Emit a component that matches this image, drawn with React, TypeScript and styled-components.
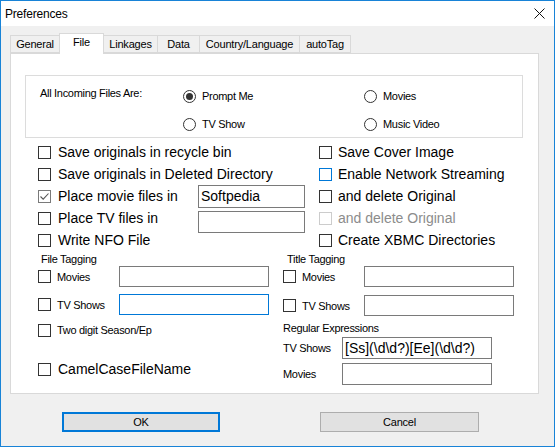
import React from "react";
import styled, { createGlobalStyle } from "styled-components";

const GlobalStyle = createGlobalStyle`
  html, body {
    margin: 0;
    padding: 0;
    background: #ffffff;
  }
  * {
    box-sizing: border-box;
  }
`;

const sans = `"Liberation Sans", Arial, sans-serif`;

const Window = styled.div`
  width: 555px;
  height: 447px;
  border: 1px solid #1883d7;
  background: #f0f0f0;
  font-family: ${sans};
  color: #000;
  display: flex;
  flex-direction: column;
  overflow: hidden;
`;

const TitleBar = styled.div`
  height: 25px;
  background: #fff;
  display: flex;
  align-items: center;
  justify-content: space-between;
  padding: 0 9px 0 4px;
  font-size: 12px;
  letter-spacing: -0.2px;
`;

const Body = styled.div`
  padding: 7px 0 0 9px;
`;

const TabStrip = styled.div`
  display: flex;
  align-items: flex-end;
  height: 20px;
  position: relative;
  z-index: 2;
`;

const Tab = styled.div<{ $w: number; $active?: boolean }>`
  width: ${(p) => p.$w}px;
  height: ${(p) => (p.$active ? 21 : 18)}px;
  margin-bottom: ${(p) => (p.$active ? -1 : 0)}px;
  border: 1px solid #d9d9d9;
  border-bottom: ${(p) => (p.$active ? "none" : "1px solid #d9d9d9")};
  background: ${(p) => (p.$active ? "#fff" : "#f0f0f0")};
  font-size: 11px;
  letter-spacing: -0.2px;
  display: flex;
  justify-content: center;
  align-items: ${(p) => (p.$active ? "flex-start" : "center")};
  padding-top: ${(p) => (p.$active ? 2 : 0)}px;
  & + & {
    margin-left: -1px;
  }
`;

const Panel = styled.div`
  width: 529px;
  height: 341px;
  border: 1px solid #d9d9d9;
  background: #fff;
  padding: 21px 0 0 0;
`;

const GroupBox = styled.div`
  margin-left: 14px;
  width: 498px;
  height: 63px;
  border: 1px solid #dcdcdc;
  padding: 6px 0 0 14px;
  display: grid;
  grid-template-columns: 143px 181px 1fr;
  grid-template-rows: 28px 28px;
  align-items: center;
`;

const SmallText = styled.span<{ $lift?: number }>`
  font-size: 11px;
  letter-spacing: -0.3px;
  white-space: nowrap;
  margin-bottom: ${(p) => p.$lift ?? 0}px;
`;

const BigText = styled.span<{ $disabled?: boolean }>`
  font-size: 14px;
  white-space: nowrap;
  color: ${(p) => (p.$disabled ? "#8c8c8c" : "#000")};
`;

const Option = styled.label<{ $gap: number }>`
  display: flex;
  align-items: center;
  gap: ${(p) => p.$gap}px;
`;

const RadioCircle = styled.span<{ $on?: boolean }>`
  width: 13px;
  height: 13px;
  border-radius: 50%;
  border: 1px solid #333;
  background: #fff;
  display: inline-flex;
  align-items: center;
  justify-content: center;
  flex: none;
  &::after {
    content: "";
    width: 7px;
    height: 7px;
    border-radius: 50%;
    background: ${(p) => (p.$on ? "#333" : "transparent")};
  }
`;

type BoxState = "normal" | "checked" | "hover" | "disabled";

const boxBorder: Record<BoxState, string> = {
  normal: "#333333",
  checked: "#7a7a7a",
  hover: "#0078d7",
  disabled: "#cccccc",
};

const CheckSquare = styled.span<{ $state: BoxState }>`
  width: 13px;
  height: 13px;
  border: 1px solid ${(p) => boxBorder[p.$state]};
  background: #fff;
  flex: none;
  display: inline-flex;
  align-items: center;
  justify-content: center;
`;

const CheckBox = ({ state = "normal" }: { state?: BoxState }) => (
  <CheckSquare $state={state}>
    {state === "checked" && (
      <svg width="11" height="11" viewBox="0 0 11 11">
        <path d="M1.5 5.5 L4.2 8.2 L9.5 2.5" fill="none" stroke="#555" strokeWidth="1.1" />
      </svg>
    )}
  </CheckSquare>
);

const CheckGrid = styled.div`
  margin: 3px 0 0 27px;
  display: grid;
  grid-template-columns: 160px 107px 14px 1fr;
  grid-auto-rows: 22px;
  align-items: center;
`;

const Wide = styled.div`
  grid-column: 1 / 4;
`;

const TextBox = styled.div<{ $w: number; $h: number; $focus?: boolean; $shift?: number }>`
  width: ${(p) => p.$w}px;
  height: ${(p) => p.$h}px;
  border: 1px solid ${(p) => (p.$focus ? "#0078d7" : "#7a7a7a")};
  background: #fff;
  font-size: 14px;
  padding-left: 2px;
  display: flex;
  align-items: center;
  white-space: nowrap;
  margin-top: ${(p) => (p.$shift ?? 0) * 2}px;
`;

const Lower = styled.div`
  margin-left: 27px;
  display: grid;
  grid-template-columns: 245px 1fr;
`;

const Column = styled.div`
  display: flex;
  flex-direction: column;
`;

const Heading = styled.div<{ $indent: number; $mt?: number; $h?: number }>`
  height: ${(p) => p.$h ?? 15}px;
  margin-top: ${(p) => p.$mt ?? 0}px;
  padding-left: ${(p) => p.$indent}px;
  font-size: 11px;
  letter-spacing: -0.3px;
  display: flex;
  align-items: center;
`;

const FieldRow = styled.div<{ $label: number; $h: number; $mt?: number }>`
  display: grid;
  grid-template-columns: ${(p) => p.$label}px 150px;
  align-items: center;
  height: ${(p) => p.$h}px;
  margin-top: ${(p) => p.$mt ?? 0}px;
`;

const Footer = styled.div`
  display: flex;
  gap: 100px;
  margin: 18px 0 0 52px;
`;

const Button = styled.div<{ $primary?: boolean; $w: number }>`
  width: ${(p) => p.$w}px;
  height: 20px;
  border: ${(p) => (p.$primary ? "2px solid #0078d7" : "1px solid #adadad")};
  background: #e1e1e1;
  font-size: 11px;
  letter-spacing: -0.2px;
  display: flex;
  align-items: center;
  justify-content: center;
`;

const tabs = [
  { name: "General", w: 50 },
  { name: "File", w: 45, active: true },
  { name: "Linkages", w: 55 },
  { name: "Data", w: 43 },
  { name: "Country/Language", w: 101 },
  { name: "autoTag", w: 52 },
];

const App = () => {
  return (
    <>
      <GlobalStyle />
      <Window>
        <TitleBar>
          <span>Preferences</span>
          <svg width="11" height="11" viewBox="0 0 11 11">
            <path d="M0.5 0.5 L10.5 10.5 M10.5 0.5 L0.5 10.5" stroke="#111" strokeWidth="1" />
          </svg>
        </TitleBar>
        <Body>
          <TabStrip>
            {tabs.map((t) => (
              <Tab key={t.name} $w={t.w} $active={t.active}>
                {t.name}
              </Tab>
            ))}
          </TabStrip>
          <Panel>
            <GroupBox>
              <SmallText $lift={6}>All Incoming Files Are:</SmallText>
              <Option $gap={6}>
                <RadioCircle $on />
                <SmallText>Prompt Me</SmallText>
              </Option>
              <Option $gap={6}>
                <RadioCircle />
                <SmallText>Movies</SmallText>
              </Option>
              <span />
              <Option $gap={6}>
                <RadioCircle />
                <SmallText>TV Show</SmallText>
              </Option>
              <Option $gap={6}>
                <RadioCircle />
                <SmallText>Music Video</SmallText>
              </Option>
            </GroupBox>

            <CheckGrid>
              <Wide>
                <Option $gap={7}>
                  <CheckBox />
                  <BigText>Save originals in recycle bin</BigText>
                </Option>
              </Wide>
              <Option $gap={6}>
                <CheckBox />
                <BigText>Save Cover Image</BigText>
              </Option>

              <Wide>
                <Option $gap={7}>
                  <CheckBox />
                  <BigText>Save originals in Deleted Directory</BigText>
                </Option>
              </Wide>
              <Option $gap={6}>
                <CheckBox state="hover" />
                <BigText>Enable Network Streaming</BigText>
              </Option>

              <Option $gap={7}>
                <CheckBox state="checked" />
                <BigText>Place movie files in</BigText>
              </Option>
              <TextBox $w={107} $h={23}>Softpedia</TextBox>
              <span />
              <Option $gap={6}>
                <CheckBox />
                <BigText>and delete Original</BigText>
              </Option>

              <Option $gap={7}>
                <CheckBox />
                <BigText>Place TV files in</BigText>
              </Option>
              <TextBox $w={107} $h={22} $shift={4} />
              <span />
              <Option $gap={6}>
                <CheckBox state="disabled" />
                <BigText $disabled>and delete Original</BigText>
              </Option>

              <Wide>
                <Option $gap={7}>
                  <CheckBox />
                  <BigText>Write NFO File</BigText>
                </Option>
              </Wide>
              <Option $gap={6}>
                <CheckBox />
                <BigText>Create XBMC Directories</BigText>
              </Option>
            </CheckGrid>

            <Lower>
              <Column>
                <Heading $indent={3}>File Tagging</Heading>
                <FieldRow $label={81} $h={20}>
                  <Option $gap={6}>
                    <CheckBox />
                    <SmallText>Movies</SmallText>
                  </Option>
                  <TextBox $w={150} $h={21} />
                </FieldRow>
                <FieldRow $label={81} $h={20} $mt={8}>
                  <Option $gap={6}>
                    <CheckBox />
                    <SmallText>TV Shows</SmallText>
                  </Option>
                  <TextBox $w={150} $h={21} $focus />
                </FieldRow>
                <FieldRow $label={200} $h={20} $mt={6}>
                  <Option $gap={6}>
                    <CheckBox />
                    <SmallText>Two digit Season/Ep</SmallText>
                  </Option>
                </FieldRow>
                <FieldRow $label={200} $h={20} $mt={19}>
                  <Option $gap={7}>
                    <CheckBox />
                    <BigText>CamelCaseFileName</BigText>
                  </Option>
                </FieldRow>
              </Column>

              <Column>
                <Heading $indent={4}>Title Tagging</Heading>
                <FieldRow $label={81} $h={20}>
                  <Option $gap={6}>
                    <CheckBox />
                    <SmallText>Movies</SmallText>
                  </Option>
                  <TextBox $w={150} $h={21} />
                </FieldRow>
                <FieldRow $label={81} $h={20} $mt={9}>
                  <Option $gap={6}>
                    <CheckBox />
                    <SmallText>TV Shows</SmallText>
                  </Option>
                  <TextBox $w={150} $h={21} />
                </FieldRow>
                <Heading $indent={0} $mt={5} $h={16}>
                  Regular Expressions
                </Heading>
                <FieldRow $label={59} $h={22} $mt={1}>
                  <SmallText>TV Shows</SmallText>
                  <TextBox $w={150} $h={22}>
                    [Ss](\d\d?)[Ee](\d\d?)
                  </TextBox>
                </FieldRow>
                <FieldRow $label={59} $h={22} $mt={4}>
                  <SmallText>Movies</SmallText>
                  <TextBox $w={150} $h={22} />
                </FieldRow>
              </Column>
            </Lower>
          </Panel>
          <Footer>
            <Button $primary $w={158}>
              OK
            </Button>
            <Button $w={159}>Cancel</Button>
          </Footer>
        </Body>
      </Window>
    </>
  );
};

export default App;
